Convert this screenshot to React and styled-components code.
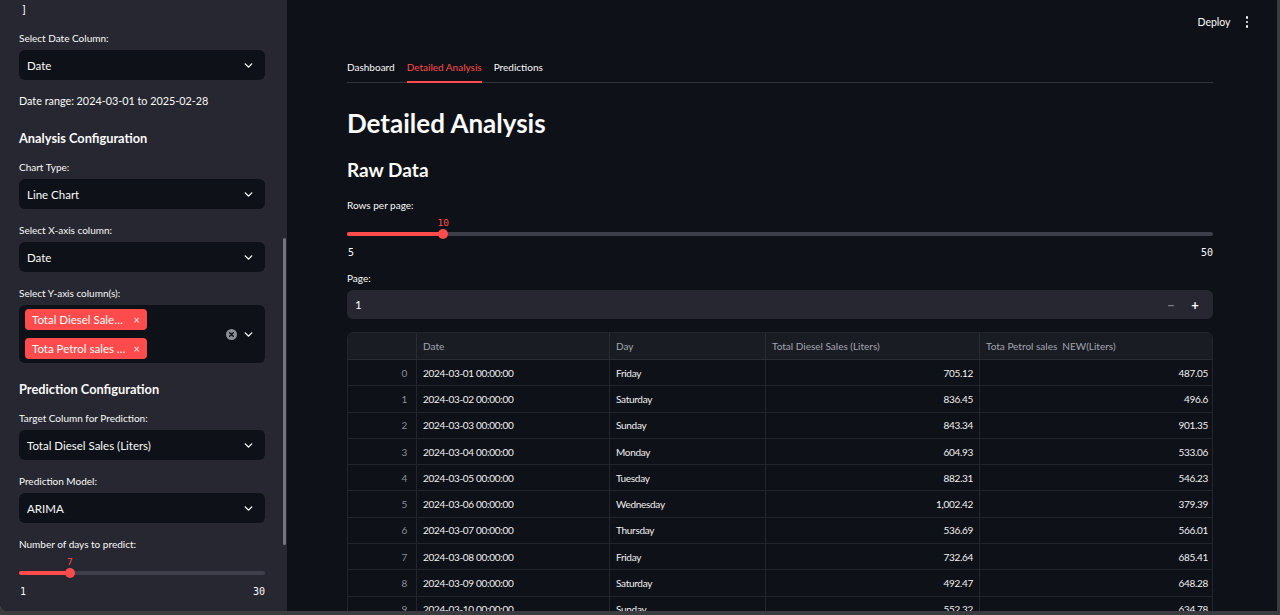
import React from 'react'
import styled, { createGlobalStyle } from 'styled-components'
import { ChevronDown } from 'lucide-react'

const GlobalStyle = createGlobalStyle`
  html, body {
    margin: 0;
    padding: 0;
    background: #3b3c40;
  }
  body {
    font-family: Lato, "Noto Sans", sans-serif;
    color: #fafafa;
  }
`

const rows = [
  ['2024-03-01 00:00:00', 'Friday', '705.12', '487.05'],
  ['2024-03-02 00:00:00', 'Saturday', '836.45', '496.6'],
  ['2024-03-03 00:00:00', 'Sunday', '843.34', '901.35'],
  ['2024-03-04 00:00:00', 'Monday', '604.93', '533.06'],
  ['2024-03-05 00:00:00', 'Tuesday', '882.31', '546.23'],
  ['2024-03-06 00:00:00', 'Wednesday', '1,002.42', '379.39'],
  ['2024-03-07 00:00:00', 'Thursday', '536.69', '566.01'],
  ['2024-03-08 00:00:00', 'Friday', '732.64', '685.41'],
  ['2024-03-09 00:00:00', 'Saturday', '492.47', '648.28'],
  ['2024-03-10 00:00:00', 'Sunday', '552.32', '634.78'],
]

export default function App() {
  return (
    <>
      <GlobalStyle />
      <Frame>
        <Sidebar>
          <Bracket>]</Bracket>
          <Field>
            <Label>Select Date Column:</Label>
            <Select>Date</Select>
          </Field>
          <Note>Date range: 2024-03-01 to 2025-02-28</Note>
          <SideHeading>Analysis Configuration</SideHeading>
          <Field>
            <Label>Chart Type:</Label>
            <Select>Line Chart</Select>
          </Field>
          <Field>
            <Label>Select X-axis column:</Label>
            <Select>Date</Select>
          </Field>
          <Field>
            <Label>Select Y-axis column(s):</Label>
            <MultiBox>
              <Tags>
                <Tag>Total Diesel Sale…<TagX>×</TagX></Tag>
                <Tag>Tota Petrol sales …<TagX>×</TagX></Tag>
              </Tags>
              <ClearIcon />
              <Chevron />
            </MultiBox>
          </Field>
          <SideHeading>Prediction Configuration</SideHeading>
          <Field>
            <Label>Target Column for Prediction:</Label>
            <Select>Total Diesel Sales (Liters)</Select>
          </Field>
          <Field>
            <Label>Prediction Model:</Label>
            <Select>ARIMA</Select>
          </Field>
          <Field>
            <Label>Number of days to predict:</Label>
            <Slider value={7} min={1} max={30} />
          </Field>
          <Scrollbar />
        </Sidebar>
        <Main>
          <TopBar>
            <Deploy>Deploy</Deploy>
            <Kebab>
              <span /><span /><span />
            </Kebab>
          </TopBar>
          <Content>
            <TabBar>
              <Tab>Dashboard</Tab>
              <Tab $active>Detailed Analysis</Tab>
              <Tab>Predictions</Tab>
            </TabBar>
            <H1>Detailed Analysis</H1>
            <H2>Raw Data</H2>
            <Label>Rows per page:</Label>
            <Slider value={10} min={5} max={50} />
            <PageField>
              <Label>Page:</Label>
              <NumberInput>
                <NumberValue>1</NumberValue>
                <StepButton $dim>−</StepButton>
                <StepButton>+</StepButton>
              </NumberInput>
            </PageField>
            <Table>
              <HeadCell />
              <HeadCell>Date</HeadCell>
              <HeadCell>Day</HeadCell>
              <HeadCell>Total Diesel Sales (Liters)</HeadCell>
              <HeadCell>Tota Petrol sales&nbsp; NEW(Liters)</HeadCell>
              {rows.map((r, i) => (
                <React.Fragment key={i}>
                  <Cell $index $num>{i}</Cell>
                  <Cell>{r[0]}</Cell>
                  <Cell>{r[1]}</Cell>
                  <Cell $num>{r[2]}</Cell>
                  <Cell $num>{r[3]}</Cell>
                </React.Fragment>
              ))}
            </Table>
          </Content>
        </Main>
      </Frame>
    </>
  )
}

function Select({ children }) {
  return (
    <SelectBox>
      <span>{children}</span>
      <Chevron />
    </SelectBox>
  )
}

function Chevron() {
  return (
    <ChevronWrap>
      <ChevronDown size={13} strokeWidth={2.6} color="#fafafa" />
    </ChevronWrap>
  )
}

function ClearIcon() {
  return (
    <svg width="11" height="11" viewBox="0 0 12 12">
      <circle cx="6" cy="6" r="6" fill="#8b8d97" />
      <path d="M4 4l4 4M8 4l-4 4" stroke="#0e1117" strokeWidth="1.5" strokeLinecap="round" />
    </svg>
  )
}

function Slider({ value, min, max }) {
  const pct = ((value - min) / (max - min)) * 100
  return (
    <SliderWrap>
      <SliderValue style={{ left: `${pct}%` }}>{value}</SliderValue>
      <Track>
        <Fill style={{ width: `${pct}%` }} />
        <Thumb style={{ left: `${pct}%` }} />
      </Track>
      <Ticks>
        <span>{min}</span>
        <span>{max}</span>
      </Ticks>
    </SliderWrap>
  )
}

const Frame = styled.div`
  width: 1277px;
  height: 611px;
  display: flex;
  overflow: hidden;
  border-bottom-left-radius: 8px;
  background: #0e1117;
`

const Sidebar = styled.aside`
  position: relative;
  width: 287px;
  flex-shrink: 0;
  box-sizing: border-box;
  padding: 2px 22px 0 19px;
  background: #262730;
  display: flex;
  flex-direction: column;
`

const Scrollbar = styled.div`
  position: absolute;
  right: 1px;
  top: 238px;
  width: 3px;
  height: 307px;
  border-radius: 2px;
  background: #75767c;
`

const Bracket = styled.div`
  font-family: "DejaVu Sans Mono", monospace;
  font-size: 10px;
  line-height: 16px;
  padding-left: 2px;
  margin-bottom: 13px;
`

const Field = styled.div`
  display: flex;
  flex-direction: column;
  flex-shrink: 0;
  margin-bottom: 14px;
`

const Label = styled.div`
  font-size: 10px;
  line-height: 14px;
  color: #fafafa;
  margin-bottom: 5px;
`

const SelectBox = styled.div`
  height: 30px;
  box-sizing: border-box;
  border-radius: 6px;
  background: #0e1117;
  display: flex;
  align-items: center;
  justify-content: space-between;
  padding: 0 10px 0 8px;
  font-size: 11.5px;
`

const ChevronWrap = styled.span`
  display: flex;
  align-items: center;
`

const Note = styled.div`
  font-size: 10.8px;
  line-height: 18px;
  margin: -2px 0 19px;
`

const SideHeading = styled.div`
  font-size: 12.8px;
  font-weight: 700;
  line-height: 18px;
  margin-bottom: 13px;
  margin-top: 0;
  ${Field} + & {
    margin-top: 3px;
  }
`

const MultiBox = styled.div`
  height: 58px;
  box-sizing: border-box;
  border-radius: 6px;
  background: #0e1117;
  display: flex;
  align-items: center;
  gap: 5px;
  padding: 0 10px 0 6px;
`

const Tags = styled.div`
  flex: 1;
  display: flex;
  flex-direction: column;
  gap: 8px;
`

const Tag = styled.div`
  width: 122px;
  height: 21px;
  box-sizing: border-box;
  border-radius: 4px;
  background: #ff4b4b;
  color: #fff;
  font-size: 11.5px;
  display: flex;
  align-items: center;
  justify-content: space-between;
  padding: 0 7px;
`

const TagX = styled.span`
  font-size: 11px;
  opacity: 0.85;
`

const SliderWrap = styled.div`
  position: relative;
  flex-shrink: 0;
  padding-top: 15px;
`

const SliderValue = styled.div`
  position: absolute;
  top: 0;
  transform: translateX(-50%);
  font-family: "DejaVu Sans Mono", monospace;
  font-size: 9.5px;
  color: #ff4b4b;
`

const Track = styled.div`
  position: relative;
  height: 4px;
  border-radius: 2px;
  background: #3d3f4a;
`

const Fill = styled.div`
  height: 100%;
  border-radius: 2px;
  background: #ff4b4b;
`

const Thumb = styled.div`
  position: absolute;
  top: 50%;
  width: 10px;
  height: 10px;
  border-radius: 50%;
  background: #ff4b4b;
  transform: translate(-50%, -50%);
`

const Ticks = styled.div`
  display: flex;
  justify-content: space-between;
  margin-top: 10px;
  font-family: "DejaVu Sans Mono", monospace;
  font-size: 10px;
  line-height: 14px;
  color: #fafafa;
  padding-left: 1px;
`

const Main = styled.main`
  flex: 1;
  display: flex;
  flex-direction: column;
  overflow: hidden;
`

const TopBar = styled.div`
  height: 44px;
  flex-shrink: 0;
  display: flex;
  align-items: center;
  justify-content: flex-end;
  gap: 15px;
  padding-right: 29px;
`

const Deploy = styled.span`
  font-size: 10.5px;
  color: #fafafa;
`

const Kebab = styled.span`
  display: flex;
  flex-direction: column;
  gap: 2px;
  span {
    width: 2.5px;
    height: 2.5px;
    border-radius: 50%;
    background: #fafafa;
  }
`

const Content = styled.div`
  width: 866px;
  flex-shrink: 0;
  margin-left: 60px;
  display: flex;
  flex-direction: column;
`

const TabBar = styled.div`
  display: flex;
  gap: 12px;
  margin-top: 12px;
  border-bottom: 1px solid #31333f;
  height: 26px;
`

const Tab = styled.div`
  font-size: 10px;
  line-height: 22px;
  color: ${p => (p.$active ? '#ff4b4b' : '#fafafa')};
  border-bottom: 2px solid ${p => (p.$active ? '#ff4b4b' : 'transparent')};
  margin-bottom: -1px;
`

const H1 = styled.h1`
  margin: 22px 0 0;
  font-size: 26px;
  font-weight: 700;
  line-height: 36px;
`

const H2 = styled.h2`
  margin: 16px 0 15px;
  font-size: 19px;
  font-weight: 700;
  line-height: 26px;
`

const PageField = styled.div`
  margin-top: 11px;
  display: flex;
  flex-direction: column;
`

const NumberInput = styled.div`
  height: 29px;
  border-radius: 6px;
  background: #262730;
  display: flex;
  align-items: center;
  padding: 0 6px 0 8px;
`

const NumberValue = styled.span`
  flex: 1;
  font-size: 11.5px;
  color: #fafafa;
`

const StepButton = styled.span`
  width: 24px;
  text-align: center;
  font-size: 13px;
  font-weight: 700;
  color: ${p => (p.$dim ? '#7d7f88' : '#fafafa')};
`

const Table = styled.div`
  margin-top: 13px;
  display: grid;
  grid-template-columns: 69px 193px 156px 214px 234px;
  grid-template-rows: 27px;
  grid-auto-rows: 26.3px;
  border: 1px solid #23252d;
  border-radius: 6px;
  overflow: hidden;
`

const HeadCell = styled.div`
  box-sizing: border-box;
  background: #1a1c23;
  color: #a2a5b0;
  font-size: 10px;
  display: flex;
  align-items: center;
  padding: 0 6px;
  border-right: 1px solid #2a2c35;
  border-bottom: 1px solid #2a2c35;
  &:nth-child(5) {
    border-right: none;
  }
`

const Cell = styled.div`
  box-sizing: border-box;
  font-size: 10px;
  letter-spacing: -0.3px;
  color: ${p => (p.$index ? '#8d909b' : '#f0f0f2')};
  display: flex;
  align-items: center;
  justify-content: ${p => (p.$num ? 'flex-end' : 'flex-start')};
  padding: 0 ${p => (p.$index ? '9px' : '6px')};
  border-right: 1px solid #23252d;
  border-bottom: 1px solid #23252d;
  &:nth-child(5n) {
    border-right: none;
  }
`
